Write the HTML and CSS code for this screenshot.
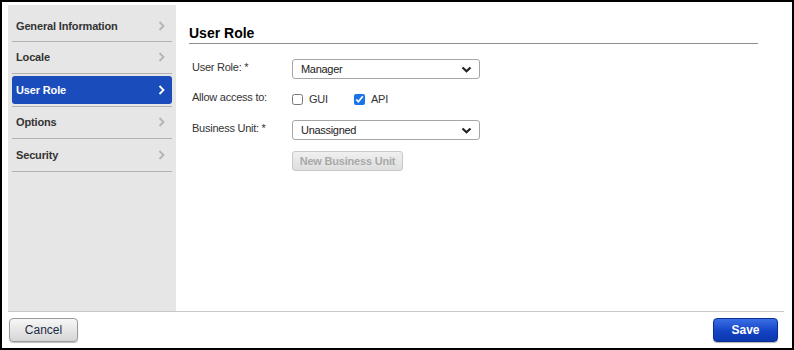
FILE: index.html
```html
<!doctype html>
<html>
<head>
  <meta charset="UTF-8">
  <link rel="stylesheet" href="styles.css">
</head>
<body>
  <div class="Window">
    <div class="Window-body">
      <ul class="Nav">
        <li class="Nav-item"><a href="#">General Information<svg class="Nav-chevron" width="7" height="10" viewBox="0 0 7 10"><polyline points="1.5,1 5.5,5 1.5,9" /></svg></a></li>
        <li class="Nav-item"><a href="#">Locale<svg class="Nav-chevron" width="7" height="10" viewBox="0 0 7 10"><polyline points="1.5,1 5.5,5 1.5,9" /></svg></a></li>
        <li class="Nav-item is-active"><a href="#">User Role<svg class="Nav-chevron" width="7" height="10" viewBox="0 0 7 10"><polyline points="1.5,1 5.5,5 1.5,9" /></svg></a></li>
        <li class="Nav-item"><a href="#">Options<svg class="Nav-chevron" width="7" height="10" viewBox="0 0 7 10"><polyline points="1.5,1 5.5,5 1.5,9" /></svg></a></li>
        <li class="Nav-item"><a href="#">Security<svg class="Nav-chevron" width="7" height="10" viewBox="0 0 7 10"><polyline points="1.5,1 5.5,5 1.5,9" /></svg></a></li>
      </ul>

      <div class="Panel">
        <h2 class="Panel-title">User Role</h2>
        <div class="Form">
          <div class="Form-row">
            <label class="Form-label">User Role: *</label>
            <div class="Select">
              <span>Manager</span>
              <svg width="11" height="7" viewBox="0 0 11 7"><polyline points="1.5,1.5 5.5,5.2 9.5,1.5" /></svg>
            </div>
          </div>
          <div class="Form-row">
            <label class="Form-label">Allow access to:</label>
            <label class="Check"><input type="checkbox"> GUI</label>
            <label class="Check"><input type="checkbox" checked> API</label>
          </div>
          <div class="Form-row">
            <label class="Form-label">Business Unit: *</label>
            <div class="Select">
              <span>Unassigned</span>
              <svg width="11" height="7" viewBox="0 0 11 7"><polyline points="1.5,1.5 5.5,5.2 9.5,1.5" /></svg>
            </div>
          </div>
          <div class="Form-row">
            <span class="Form-label"></span>
            <button class="Btn-small" disabled>New Business Unit</button>
          </div>
        </div>
      </div>
    </div>

    <div class="Window-footer">
      <button class="Btn Btn-cancel">Cancel</button>
      <button class="Btn Btn-save">Save</button>
    </div>
  </div>
</body>
</html>
```

FILE: styles.css
```css
html, body {
  margin: 0;
  padding: 0;
  background: #fff;
  font-family: 'Liberation Sans', Arial, Helvetica, sans-serif;
  color: #333;
}

.Window {
  width: 794px;
  height: 350px;
  box-sizing: border-box;
  border: 2px solid #000;
  padding: 3px 8px 0 6px;
  display: flex;
  flex-direction: column;
}

.Window-body {
  flex: 1;
  display: flex;
}

/* left navigation */
.Nav {
  width: 168px;
  margin: 0;
  padding: 4px 4px 0;
  box-sizing: border-box;
  list-style-type: none;
  background-color: #e6e6e6;
}

.Nav-item {
  border-bottom: 1px solid #b3b3b3;
}

.Nav-item a {
  display: flex;
  align-items: center;
  justify-content: space-between;
  height: 27.5px;
  margin: 2px 0;
  padding: 0 7px 0 4px;
  border-radius: 3px;
  font-size: 11px;
  font-weight: bold;
  letter-spacing: -0.15px;
  color: #333;
  text-decoration: none;
}

.Nav-item:first-child a {
  height: 25.5px;
  margin-top: 4px;
}

.Nav-chevron polyline {
  fill: none;
  stroke: #b4b4b4;
  stroke-width: 1.8;
}

.Nav-item.is-active a {
  background-color: #1b4cbb;
  color: #fff;
}

.Nav-item.is-active .Nav-chevron polyline {
  stroke: #fff;
}

/* main panel */
.Panel {
  flex: 1;
  padding: 20px 26px 0 13px;
}

.Panel-title {
  margin: 0;
  padding-bottom: 1px;
  font-size: 14px;
  line-height: 17px;
  font-weight: bold;
  color: #000;
  border-bottom: 1px solid #8c8c8c;
}

.Form {
  margin-top: 15px;
  display: flex;
  flex-direction: column;
  gap: 10px;
}

.Form-row {
  display: flex;
  align-items: center;
  height: 20px;
}

.Form-row + .Form-row + .Form-row {
  margin-top: 1px;
}

.Form-label {
  width: 100px;
  padding-left: 3px;
  margin-top: -4px;
  font-size: 11px;
  letter-spacing: -0.25px;
  color: #333;
}

.Select {
  width: 188px;
  height: 20px;
  box-sizing: border-box;
  border: 1px solid #a6a6a6;
  border-radius: 3px;
  display: flex;
  align-items: center;
  justify-content: space-between;
  padding: 0 7px 0 8px;
  font-size: 11px;
  letter-spacing: -0.3px;
  color: #222;
}

.Select polyline {
  fill: none;
  stroke: #222;
  stroke-width: 2.2;
}

.Check {
  display: flex;
  align-items: center;
  margin-right: 26px;
  font-size: 11px;
  letter-spacing: -0.2px;
  color: #333;
}

.Check input {
  width: 11px;
  height: 11px;
  margin: 0 6px 0 0;
  accent-color: #1a73e8;
}

.Btn-small {
  width: 111px;
  height: 20px;
  padding: 0;
  border: 1px solid #c9c9c9;
  border-radius: 3px;
  background: linear-gradient(#f0f0f0, #dedede);
  font-family: inherit;
  font-size: 11px;
  font-weight: bold;
  letter-spacing: -0.2px;
  color: #a9a9a9;
}

/* footer */
.Window-footer {
  height: 37px;
  box-sizing: border-box;
  border-top: 1px solid #c8c8c8;
  padding: 6px 6px 0 1px;
  display: flex;
  align-items: flex-start;
  justify-content: space-between;
}

.Btn {
  height: 24px;
  border-radius: 4px;
  font-family: inherit;
  font-size: 12px;
  padding: 0;
}

.Btn-cancel {
  width: 69px;
  border: 1px solid #9b9b9b;
  background: linear-gradient(#f7f7f7, #d6d6d6);
  color: #1d2b46;
  box-shadow: 0 1px 1px rgba(0, 0, 0, 0.25);
}

.Btn-save {
  width: 65px;
  border: 1px solid #0a2f8e;
  background: linear-gradient(#3a6fe6, #1443c4 55%, #0c38ae);
  color: #fff;
  font-weight: bold;
  box-shadow: 0 1px 1px rgba(0, 0, 0, 0.3);
}
```
